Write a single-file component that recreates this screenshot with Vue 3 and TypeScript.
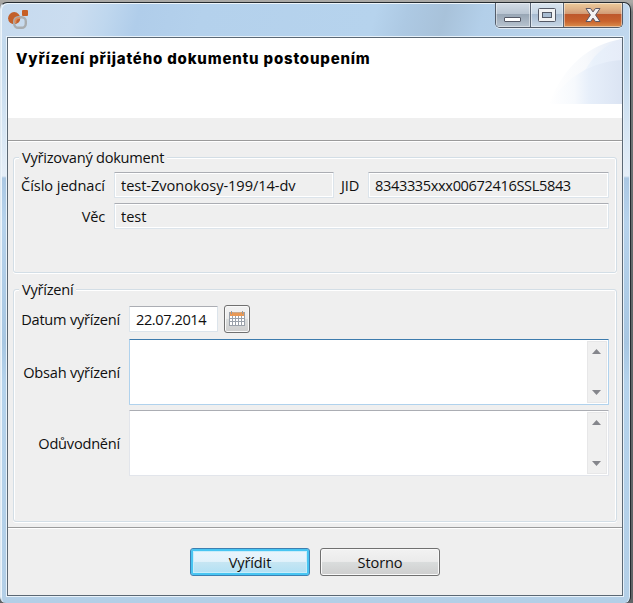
<script setup lang="ts">
import { ref } from 'vue'

const referenceNumber = ref<string>('test-Zvonokosy-199/14-dv')
const jid = ref<string>('8343335xxx00672416SSL5843')
const subject = ref<string>('test')
const settledOn = ref<string>('22.07.2014')
const content = ref<string>('')
const reason = ref<string>('')
</script>

<template>
  <div class="desktop">
    <div class="window">
      <header class="titlebar">
        <svg class="app-icon" width="21" height="20" viewBox="0 0 21 20">
          <circle cx="6.2" cy="8.2" r="6.1" fill="#c2602b" />
          <rect x="14" y="0" width="6" height="6" rx="1" fill="#c75f25" />
          <rect x="6.2" y="7.2" width="11.6" height="10.6" rx="4" fill="none" stroke="#a9adb0" stroke-width="2.4" />
          <path d="M7.3 13c-.3-3.300 1.200-5.200 4.500-5" fill="none" stroke="#dd8d5d" stroke-width="2" />
        </svg>
        <div class="controls">
          <button class="control minimize" aria-label="Minimalizovat">
            <svg width="18" height="24" viewBox="0 0 18 24"><rect x=".5" y="14.500" width="16" height="4" rx=".5" fill="#fff" stroke="#545966" /></svg>
          </button>
          <button class="control maximize" aria-label="Maximalizovat">
            <svg width="18" height="24" viewBox="0 0 18 24">
              <rect x=".5" y="5.500" width="17" height="13" rx="1" fill="#f2f3f4" stroke="#545966" />
              <rect x="4.500" y="9.500" width="9" height="5" fill="#a9bdd2" stroke="#545966" />
            </svg>
          </button>
          <button class="control close" aria-label="Zavřít">
            <svg width="16" height="24" viewBox="0 0 16 24"><path d="M1 5.500h4.600L8 8.900l2.400-3.400H15L10.600 12l4.400 6.500h-4.600L8 15.100l-2.400 3.400H1L5.400 12Z" fill="#f4f4f4" stroke="#5b5663" stroke-linejoin="round" /></svg>
          </button>
        </div>
      </header>

      <main class="client">
        <div class="banner">
          <h1>Vyřízení přijatého dokumentu postoupením</h1>
          <svg class="swoosh" width="73" height="66" viewBox="0 0 73 66">
            <defs>
              <linearGradient id="outer"><stop offset="0" stop-color="#fff" /><stop offset=".5" stop-color="#f7f9fc" /><stop offset="1" stop-color="#e4ebf7" /></linearGradient>
              <linearGradient id="middle"><stop offset="0" stop-color="#f9fbfe" /><stop offset=".4" stop-color="#e9f1fb" /><stop offset="1" stop-color="#e6ecf8" /></linearGradient>
              <linearGradient id="inner" gradientUnits="userSpaceOnUse" x1="0" x2="73" y1="0" y2="0"><stop offset="0" stop-color="#fff" /><stop offset=".35" stop-color="#f6f9fd" /><stop offset=".55" stop-color="#e7effa" /><stop offset="1" stop-color="#dbe4f3" /></linearGradient>
            </defs>
            <path d="M0 66C14 29 40 6 73 1V66Z" fill="url(#outer)" />
            <path d="M26 66C29 31 51 7 73 1V66Z" fill="url(#middle)" />
            <path d="M0 66C19 37 43 24 73 22V66Z" fill="url(#inner)" />
          </svg>
        </div>
        <div class="message-strip"></div>
        <div class="separator"></div>

        <fieldset class="group document">
          <legend>Vyřizovaný dokument</legend>
          <div class="form">
            <label for="number">Číslo jednací</label>
            <div class="pair">
              <input id="number" class="field number" :value="referenceNumber" readonly />
              <label for="jid">JID</label>
              <input id="jid" class="field jid" :value="jid" readonly />
            </div>
            <label for="subject">Věc</label>
            <input id="subject" class="field subject" :value="subject" readonly />
          </div>
        </fieldset>

        <fieldset class="group settlement">
          <legend>Vyřízení</legend>
          <div class="form">
            <label for="date">Datum vyřízení</label>
            <div class="date-row">
              <input id="date" v-model="settledOn" class="field date" />
              <button class="push calendar" aria-label="Kalendář">
                <svg width="16" height="15" viewBox="0 0 16 15">
                  <rect x="0" y="1" width="16" height="14" fill="#9aa1aa" />
                  <rect x="1" y="1" width="14" height="4" fill="#e89956" />
                  <path d="M2.500 0v3M13.500 0v3" stroke="#929aa2" />
                  <path d="M4 1.500h8" stroke="#cba98b" />
                  <g fill="#fff">
                    <path d="M1 5h2v2H1zM4 5h2v2H4zM7 5h2v2H7zM10 5h2v2h-2zM13 5h2v2h-2z" />
                    <path d="M1 8h2v2H1zM4 8h2v2H4zM7 8h2v2H7zM10 8h2v2h-2zM13 8h2v2h-2z" />
                    <path d="M1 11h2v3H1zM4 11h2v3H4zM7 11h2v3H7zM10 11h2v3h-2zM13 11h2v3h-2z" />
                  </g>
                </svg>
              </button>
            </div>
            <label for="content">Obsah vyřízení</label>
            <div class="memo active">
              <textarea id="content" v-model="content"></textarea>
              <div class="scroll">
                <svg width="9" height="5" viewBox="0 0 9 5"><path d="M0 5 4.500 0 9 5Z" fill="#85868c" /></svg>
                <svg width="9" height="5" viewBox="0 0 9 5"><path d="M0 0h9L4.500 5Z" fill="#85868c" /></svg>
              </div>
            </div>
            <label for="reason">Odůvodnění</label>
            <div class="memo">
              <textarea id="reason" v-model="reason"></textarea>
              <div class="scroll">
                <svg width="9" height="5" viewBox="0 0 9 5"><path d="M0 5 4.500 0 9 5Z" fill="#85868c" /></svg>
                <svg width="9" height="5" viewBox="0 0 9 5"><path d="M0 0h9L4.500 5Z" fill="#85868c" /></svg>
              </div>
            </div>
          </div>
        </fieldset>

        <div class="separator bottom"></div>
        <footer class="actions">
          <button class="push primary">Vyřídit</button>
          <button class="push">Storno</button>
        </footer>
      </main>
    </div>
  </div>
</template>

<style>
body {
  margin: 0;
  overflow: hidden;
}
</style>

<style scoped>
* {
  box-sizing: border-box;
}
.desktop {
  width: 633px;
  height: 603px;
  padding-top: 2px;
  overflow: hidden;
  background: linear-gradient(#aaa9a6 0 2px, #777b7c 12px, #62686a 50%, #606467);
  font-family: 'Open Sans', 'Noto Sans', sans-serif;
  font-size: 14.6px;
  letter-spacing: -0.23px;
  color: #101010;
}
.window {
  width: 631px;
  height: 601px;
  padding: 0 7px 6px 6px;
  border: 1px solid #252b30;
  border-left-color: #dfe9f2;
  border-bottom: 0;
  border-radius: 7px 7px 6px 6px;
  box-shadow: inset 1px 1px #edf5fb, inset -1px 0 #e0edf7;
  background:
    linear-gradient(105deg, #c6daee 0, #cbddf0 12%, #bfd7ee 17%, #b0cdea 22%, #b4d1ec 32%, #b6d3ed 59%, #adc9e3 64%, #a8c2da 70%, #b3cfe9 76%, #c1d8ee 100%) 0 0 / 100% 36px no-repeat,
    linear-gradient(#c5daec 0, #c2d9ed 60px, #dce9f5 145px, #e5eef7 173px, #abc8e3 175px, #b7d3ec 220px, #a8c7e2 340px, #b5d3ec 380px, #b3cfe7 100%);
}
.titlebar {
  display: flex;
  justify-content: space-between;
  height: 34px;
}
.app-icon {
  margin: 7px 0 0 1px;
}
.controls {
  display: flex;
  width: 128px;
  height: 25px;
  border: 1px solid #535c69;
  border-top: 0;
  border-radius: 0 0 5px 5px;
  box-shadow: 0 1px #e4edf6;
  overflow: hidden;
}
.control {
  display: flex;
  justify-content: center;
  height: 24px;
  padding: 0;
  border: 0;
  border-right: 1px solid #596473;
  box-shadow: inset 0 0 0 1px rgba(255, 255, 255, 0.45);
}
.minimize {
  width: 35px;
  background: linear-gradient(#d3dce6, #b9c5d2 45%, #98a6b5 47%, #b7c3cf);
}
.maximize {
  width: 33px;
  background: linear-gradient(#dae5ef, #c5d4e3 45%, #a7bbd1 47%, #c8d7e6);
}
.control svg {
  flex: none;
}
.close {
  width: 58px;
  border-right: 0;
  background: linear-gradient(#edcb9b, #dfb389 25%, #d19a75 45%, #bd572b 47%, #c8622d 75%, #db8e4c);
}
.client {
  height: 559px;
  width: 616px;
  border: 1px solid #5b6874;
  box-shadow: 0 0 0 1px #e8f2fa;
  background: #efefef;
}
.banner {
  display: flex;
  justify-content: space-between;
  height: 80px;
  background: #fff;
}
h1 {
  margin: 11px 0 0 8px;
  font: 800 15px/20px Inter, sans-serif;
  letter-spacing: 0.81px;
  color: #000;
  white-space: nowrap;
}
.message-strip {
  height: 22px;
}
.separator {
  height: 2px;
  border-top: 1px solid #9b9b9b;
  background: #fff;
}
.group {
  width: 604px;
  min-width: 0;
  margin: 5px 0 0 5px;
  padding: 0;
  border: 1px solid #d3dee6;
  border-radius: 3px;
  box-shadow: inset 1px 1px #fff, inset -1px 0 #fff, 0 1px #fff;
}
.document {
  height: 126px;
}
.settlement {
  height: 243px;
  margin-top: 6px;
}
legend {
  margin-left: 5px;
  padding: 0 3px;
  height: 20px;
  line-height: 20px;
  letter-spacing: -0.25px;
  background: #efefef;
}
.form {
  display: grid;
  align-items: center;
  column-gap: 9px;
}
.document .form {
  grid-template-columns: 91px 495px;
  row-gap: 5px;
  padding-top: 5px;
}
.settlement .form {
  grid-template-columns: 106px 480px;
  row-gap: 5px;
  padding-top: 6px;
}
label {
  line-height: 20px;
  text-align: right;
  white-space: nowrap;
}
.pair {
  display: grid;
  grid-template-columns: 220px 34px 241px;
  align-items: center;
}
.pair label {
  padding-right: 9px;
}
.field {
  width: 100%;
  height: 26px;
  padding: 0 6px 1px;
  border: 1px solid #dce4eb;
  border-top-color: #abadb3;
  border-radius: 1px;
  outline: 0;
  box-shadow: inset 0 0 0 1px #fff;
  background: #efefef;
  font: inherit;
  color: inherit;
}
.document label[for='number'],
.field.number,
.field.subject {
  letter-spacing: -0.05px;
}
.field.jid {
  letter-spacing: -0.37px;
}
.date-row {
  display: flex;
  align-items: center;
  gap: 6px;
  height: 28px;
}
.field.date {
  width: 89px;
  letter-spacing: -0.42px;
  background: #fff;
}
.memo {
  display: flex;
  height: 66px;
  padding: 1px;
  border: 1px solid #e2e5eb;
  border-top-color: #abadb3;
  border-radius: 1px;
  background: #fff;
}
.memo.active {
  margin-top: 1px;
  border-color: #b0d2ed;
  border-top-color: #3d7bad;
}
textarea {
  flex: 1;
  padding: 2px 5px;
  border: 0;
  outline: 0;
  resize: none;
  background: transparent;
  font: inherit;
}
.scroll {
  display: flex;
  flex-direction: column;
  align-items: center;
  justify-content: space-between;
  width: 20px;
  padding: 7px 1px 7px 0;
  border: 1px solid #e7e7e8;
  background: #f0f0f0;
}
.separator.bottom {
  margin-top: 5px;
}
.actions {
  display: flex;
  gap: 10px;
  padding: 19px 0 0 182px;
}
.push {
  width: 120px;
  height: 28px;
  padding: 0;
  border: 1px solid #707070;
  border-radius: 3px;
  box-shadow: inset 0 0 0 1px #f9f9f9;
  background: linear-gradient(#f2f2f2, #ebebeb 48%, #dadddd 49%, #cecece);
  font: inherit;
  letter-spacing: -0.15px;
  color: inherit;
}
.push.calendar {
  display: flex;
  align-items: center;
  justify-content: center;
  width: 26px;
}
.calendar svg {
  margin-top: -2px;
}
.push.primary {
  border-color: #3c7fb1;
  box-shadow: inset 0 0 0 2px #48c5f2, inset 0 0 0 3px #c8edfa;
  background: linear-gradient(#eaf5fc, #e2f2fb 48%, #c7e6f3 49%, #afdff4);
}
</style>
